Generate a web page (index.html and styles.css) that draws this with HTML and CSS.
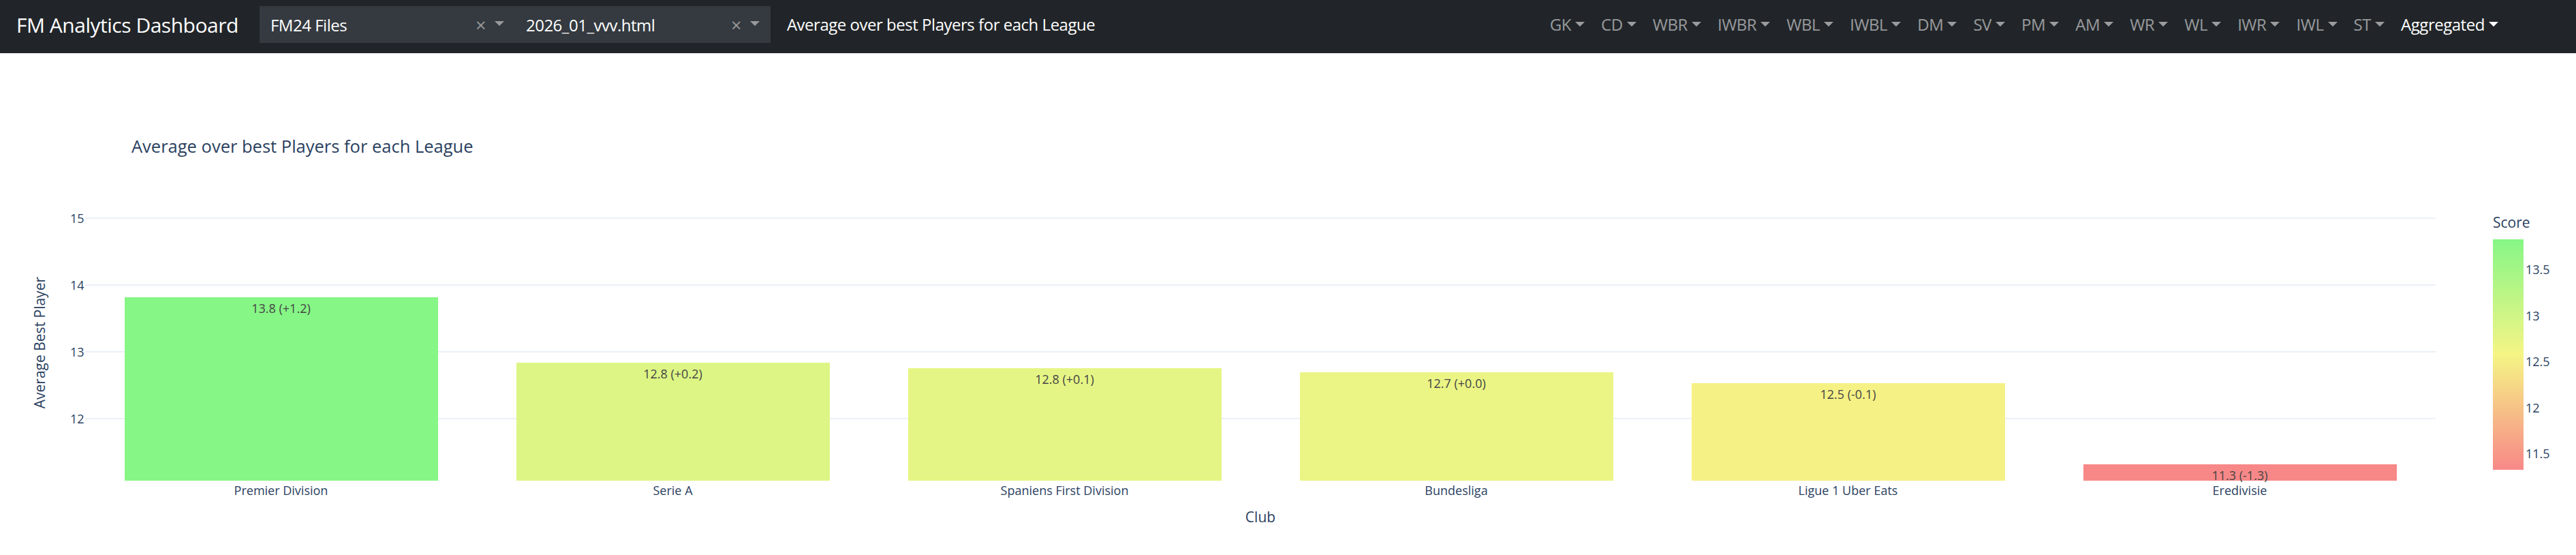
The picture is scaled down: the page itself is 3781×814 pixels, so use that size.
FILE: index.html
```html
<!DOCTYPE html>
<html lang="en">
<head>
<meta charset="utf-8">
<title>FM Analytics Dashboard</title>
<link rel="stylesheet" href="styles.css">
</head>
<body>
<nav class="navbar">
  <a class="brand" href="#">FM Analytics Dashboard</a>
  <div class="select">
    <span class="select-value">FM24 Files</span>
    <span class="select-clear">×</span>
    <span class="select-arrow-zone"><span class="select-arrow"></span></span>
  </div>
  <div class="select">
    <span class="select-value">2026_01_vvv.html</span>
    <span class="select-clear">×</span>
    <span class="select-arrow-zone"><span class="select-arrow"></span></span>
  </div>
  <span class="navbar-text">Average over best Players for each League</span>
  <ul class="nav">
    <li class="nav-link">GK<span class="caret"></span></li>
    <li class="nav-link">CD<span class="caret"></span></li>
    <li class="nav-link">WBR<span class="caret"></span></li>
    <li class="nav-link">IWBR<span class="caret"></span></li>
    <li class="nav-link">WBL<span class="caret"></span></li>
    <li class="nav-link">IWBL<span class="caret"></span></li>
    <li class="nav-link">DM<span class="caret"></span></li>
    <li class="nav-link">SV<span class="caret"></span></li>
    <li class="nav-link">PM<span class="caret"></span></li>
    <li class="nav-link">AM<span class="caret"></span></li>
    <li class="nav-link">WR<span class="caret"></span></li>
    <li class="nav-link">WL<span class="caret"></span></li>
    <li class="nav-link">IWR<span class="caret"></span></li>
    <li class="nav-link">IWL<span class="caret"></span></li>
    <li class="nav-link">ST<span class="caret"></span></li>
    <li class="nav-link active">Aggregated<span class="caret"></span></li>
  </ul>
</nav>

<main class="figure">
  <h2 class="chart-title">Average over best Players for each League</h2>

  <div class="yaxis">
    <div class="yaxis-title">Average Best Player</div>
    <div class="yticks">
      <span>15</span>
      <span>14</span>
      <span>13</span>
      <span>12</span>
    </div>
  </div>

  <div class="plot">
    <div class="category"><div class="bar" style="height:269px;background:rgb(134,246,134)"><span class="bar-text">13.8 (+1.2)</span></div></div>
    <div class="category"><div class="bar" style="height:173px;background:rgb(221,245,133)"><span class="bar-text">12.8 (+0.2)</span></div></div>
    <div class="category"><div class="bar" style="height:165px;background:rgb(229,245,133)"><span class="bar-text">12.8 (+0.1)</span></div></div>
    <div class="category"><div class="bar" style="height:159px;background:rgb(235,245,133)"><span class="bar-text">12.7 (+0.0)</span></div></div>
    <div class="category"><div class="bar" style="height:143px;background:rgb(245,241,133)"><span class="bar-text">12.5 (-0.1)</span></div></div>
    <div class="category"><div class="bar" style="height:24px;background:rgb(248,136,136)"><span class="bar-text">11.3 (-1.3)</span></div></div>
  </div>

  <div class="colorbar">
    <div class="colorbar-title">Score</div>
    <div class="colorbar-body">
      <div class="colorbar-scale"></div>
      <div class="colorbar-ticks">
        <span>13.5</span>
        <span>13</span>
        <span>12.5</span>
        <span>12</span>
        <span>11.5</span>
      </div>
    </div>
  </div>

  <div class="xlabels">
    <span>Premier Division</span>
    <span>Serie A</span>
    <span>Spaniens First Division</span>
    <span>Bundesliga</span>
    <span>Ligue 1 Uber Eats</span>
    <span>Eredivisie</span>
  </div>

  <div class="xtitle">Club</div>
</main>
</body>
</html>
```

FILE: styles.css
```css
html, body {
  margin: 0;
  padding: 0;
  background: #ffffff;
}

body {
  width: 3781px;
  height: 814px;
  overflow: hidden;
  font-family: "Open Sans", "Noto Sans", "Liberation Sans", sans-serif;
}

/* ---------- navbar ---------- */
.navbar {
  display: flex;
  align-items: center;
  height: 78px;
  box-sizing: border-box;
  padding: 9px 102px 15px 24px;
  background: #212529;
  letter-spacing: -0.03em;
}

.brand {
  font-size: 30px;
  line-height: 45px;
  color: #ffffff;
  text-decoration: none;
  margin-right: 31px;
  white-space: nowrap;
}

.select {
  display: flex;
  align-items: center;
  width: 375px;
  height: 54px;
  box-sizing: border-box;
  padding-left: 16px;
  background: #343a40;
  color: #ffffff;
  font-size: 24px;
}

.select-value {
  flex: 1;
  white-space: nowrap;
  overflow: hidden;
}

.select-clear {
  width: 25.5px;
  text-align: center;
  font-size: 27px;
  line-height: 1;
  color: #999999;
  letter-spacing: 0;
}

.select-arrow-zone {
  width: 37.5px;
  box-sizing: border-box;
  padding-right: 7.5px;
  display: flex;
  justify-content: center;
  align-items: center;
}

.select-arrow {
  width: 0;
  height: 0;
  border-style: solid;
  border-color: #999999 transparent transparent;
  border-width: 7.5px 7.5px 3.75px;
}

.navbar-text {
  margin-left: 24px;
  font-size: 24px;
  line-height: 36px;
  color: #ffffff;
  white-space: nowrap;
}

.nav {
  display: flex;
  margin: 0 0 0 auto;
  padding: 0;
  list-style: none;
}

.nav-link {
  padding: 0 12px;
  font-size: 24px;
  line-height: 36px;
  color: rgba(255, 255, 255, 0.55);
  white-space: nowrap;
}

.nav-link.active {
  color: #ffffff;
}

.caret {
  display: inline-block;
  margin-left: 0.255em;
  vertical-align: 0.255em;
  border-top: 0.3em solid;
  border-right: 0.3em solid transparent;
  border-bottom: 0;
  border-left: 0.3em solid transparent;
}

/* ---------- figure ---------- */
.figure {
  display: grid;
  grid-template-columns: 125px 3450px 1fr;
  grid-template-rows: 91px 412px auto auto;
  padding-top: 124px;
  color: #2a3f5f;
}

.chart-title {
  grid-column: 1 / 3;
  grid-row: 1;
  align-self: start;
  margin: 0;
  padding-left: 193px;
  font-size: 25.5px;
  line-height: 25.5px;
  font-weight: 400;
}

.yaxis {
  grid-column: 1;
  grid-row: 2;
  display: flex;
  padding-left: 48px;
}

.yaxis-title {
  align-self: center;
  margin-top: 8px;
  writing-mode: vertical-rl;
  transform: rotate(180deg);
  font-size: 21px;
  line-height: 21px;
  white-space: nowrap;
}

.yticks {
  flex: 1;
  display: flex;
  flex-direction: column;
  align-items: flex-end;
  padding-top: 18px;
  padding-right: 1.5px;
}

.yticks span {
  height: 98px;
  font-size: 18px;
  line-height: 18px;
}

.plot {
  grid-column: 2;
  grid-row: 2;
  display: flex;
  background-image: repeating-linear-gradient(
    to bottom,
    transparent 0,
    transparent 26px,
    #ebf0f8 26px,
    #ebf0f8 28px,
    transparent 28px,
    transparent 98px
  );
}

.category {
  flex: 1;
  display: flex;
  flex-direction: column;
  justify-content: flex-end;
  align-items: center;
}

.bar {
  width: 80%;
  display: flex;
  justify-content: center;
}

.bar-text {
  padding-top: 7px;
  font-size: 18px;
  line-height: 18px;
  color: #444444;
  white-space: nowrap;
}

.colorbar {
  grid-column: 3;
  grid-row: 1 / 3;
  align-self: end;
  margin-bottom: 16px;
  padding-left: 84px;
}

.colorbar-title {
  font-size: 21px;
  line-height: 21px;
  margin-bottom: 14px;
}

.colorbar-body {
  display: flex;
  align-items: flex-start;
}

.colorbar-scale {
  width: 45px;
  height: 338px;
  background: linear-gradient(to bottom, rgb(134, 246, 134), rgb(245, 245, 133) 50%, rgb(248, 136, 136));
}

.colorbar-ticks {
  display: flex;
  flex-direction: column;
  padding-top: 35px;
  padding-left: 3px;
}

.colorbar-ticks span {
  height: 67.5px;
  font-size: 18px;
  line-height: 18px;
}

.colorbar-ticks span:last-child {
  height: 18px;
}

.xlabels {
  grid-column: 2;
  grid-row: 3;
  display: flex;
  padding-top: 4.5px;
}

.xlabels span {
  flex: 1;
  text-align: center;
  font-size: 18px;
  line-height: 18px;
  white-space: nowrap;
}

.xtitle {
  grid-column: 2;
  grid-row: 4;
  margin-top: 20px;
  text-align: center;
  font-size: 21px;
  line-height: 21px;
}
```
